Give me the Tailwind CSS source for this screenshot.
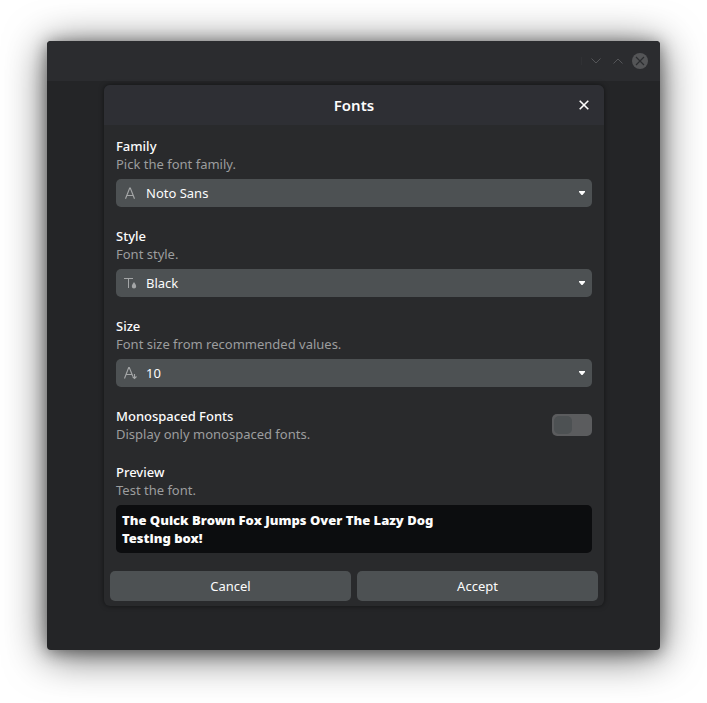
<!DOCTYPE html>
<html lang="en">
<head>
<meta charset="utf-8">
<title>Fonts</title>
<script src="https://cdn.jsdelivr.net/npm/@tailwindcss/browser@4"></script>
</head>
<body class="bg-white w-[707px] h-[703px] overflow-hidden pt-[41px] pl-[47px] font-['Noto_Sans',sans-serif] text-[13px] leading-[18px] text-[#fcfcfc]">
<div class="w-[613px] h-[609px] rounded-[4px] bg-[#242527] shadow-[0_5px_42px_rgba(0,0,0,0.66),0_2px_16px_rgba(0,0,0,0.4)] overflow-hidden flex flex-col items-center">
  <header class="w-full h-10 shrink-0 bg-[#2b2c2f] flex items-center justify-end pr-3">
    <div class="w-px h-2 bg-[#303134] mr-[6px]"></div>
    <svg class="w-4 h-4 mr-[6px]" viewBox="0 0 16 16" fill="none" stroke="#545558"><path d="M3.500 5.500L8 10l4.500-4.500"/></svg>
    <svg class="w-4 h-4 mr-[6px]" viewBox="0 0 16 16" fill="none" stroke="#545558"><path d="M3.500 10.500L8 6L12.500 10.500"/></svg>
    <svg class="w-4 h-4" viewBox="0 0 16 16" fill="none" stroke="#2b2c2f" stroke-width="1.2"><circle cx="8" cy="8" r="8" fill="#545557" stroke="none"/><path d="M4 4l8 8M12 4l-8 8"/></svg>
  </header>
  <section class="mt-1 w-[500px] h-[521px] shrink-0 rounded-[6px] bg-[#292a2c] shadow-[0_0_5px_rgba(0,0,0,0.5)] overflow-hidden flex flex-col ml-px">
    <div class="h-10 shrink-0 bg-[#2e2f34] grid grid-cols-[40px_1fr_40px] items-center">
      <h1 class="col-start-2 text-center text-[15px] font-semibold">Fonts</h1>
      <svg class="w-4 h-4 justify-self-center" viewBox="0 0 16 16" fill="none" stroke="#fcfcfc" stroke-width="1.6"><path d="M3.700 3.700l8.600 8.600M12.300 3.700l-8.600 8.600"/></svg>
    </div>
    <div class="px-3 pt-3 flex flex-col">
      <div class="h-[90px]">
        <h2 class="font-medium">Family</h2>
        <p class="text-[#9c9d9e]">Pick the font family.</p>
        <div class="mt-[6px] h-7 rounded-[5px] bg-[#4d5153] flex items-center pl-[6px] pr-[7px]">
          <svg class="w-4 h-4 mr-2" viewBox="0 0 16 16" fill="none" stroke="#a4a6a7" stroke-width="1.150"><path d="M3.500 13.800L7.700 3h.6l4.200 10.800M5 10.500h6"/></svg>
          <span class="flex-1">Noto Sans</span>
          <svg class="w-[6px] h-1" viewBox="0 0 6 4" fill="#fcfcfc"><path d="M0 0h6v1L3.500 4h-1L0 1z"/></svg>
        </div>
      </div>
      <div class="h-[90px]">
        <h2 class="font-medium">Style</h2>
        <p class="text-[#9c9d9e]">Font style.</p>
        <div class="mt-[6px] h-7 rounded-[5px] bg-[#4d5153] flex items-center pl-[6px] pr-[7px]">
          <svg class="w-4 h-4 mr-2" viewBox="0 0 16 16" fill="none" stroke="#a4a6a7"><path d="M2 3.500h9M6.500 3.500V13"/><path d="M12 7c.7 1.500 2.200 2.700 2.200 4.300a2.200 2.200 0 0 1-4.400 0c0-1.600 1.500-2.800 2.200-4.300z" fill="#a4a6a7" stroke="none"/></svg>
          <span class="flex-1">Black</span>
          <svg class="w-[6px] h-1" viewBox="0 0 6 4" fill="#fcfcfc"><path d="M0 0h6v1L3.500 4h-1L0 1z"/></svg>
        </div>
      </div>
      <div class="h-[90px]">
        <h2 class="font-medium">Size</h2>
        <p class="text-[#9c9d9e]">Font size from recommended values.</p>
        <div class="mt-[6px] h-7 rounded-[5px] bg-[#4d5153] flex items-center pl-[6px] pr-[7px]">
          <svg class="w-4 h-4 mr-2" viewBox="0 0 16 16" fill="none" stroke="#a4a6a7" stroke-width="1.150"><path d="M2.500 13.500L6.700 2.500h.6l3.400 8.500M4 9.500h6M12.500 9v4.500M10.500 11.500l2 2 2-2"/></svg>
          <span class="flex-1">10</span>
          <svg class="w-[6px] h-1" viewBox="0 0 6 4" fill="#fcfcfc"><path d="M0 0h6v1L3.500 4h-1L0 1z"/></svg>
        </div>
      </div>
      <div class="h-14 flex justify-between">
        <div>
          <h2 class="font-medium">Monospaced Fonts</h2>
          <p class="text-[#9c9d9e]">Display only monospaced fonts.</p>
        </div>
        <div class="mt-[7px] w-10 h-[22px] rounded-[5px] bg-[#5b5c5e] p-[2px]"><div class="w-[18px] h-[18px] rounded-[5px] bg-[#4d5153]"></div></div>
      </div>
      <h2 class="font-medium">Preview</h2>
      <p class="text-[#9c9d9e]">Test the font.</p>
      <div class="mt-[6px] h-12 rounded-[5px] bg-[#0c0d0f] px-[6px] py-[6px] font-black">
        <p>The Quick Brown Fox Jumps Over The Lazy Dog</p>
        <p>Testing box!</p>
      </div>
    </div>
    <div class="mt-[18px] px-[6px] grid grid-cols-2 gap-[6px]">
      <button class="h-[30px] rounded-[5px] bg-[#4d5153]">Cancel</button>
      <button class="h-[30px] rounded-[5px] bg-[#4d5153]">Accept</button>
    </div>
  </section>
</div>
</body>
</html>
